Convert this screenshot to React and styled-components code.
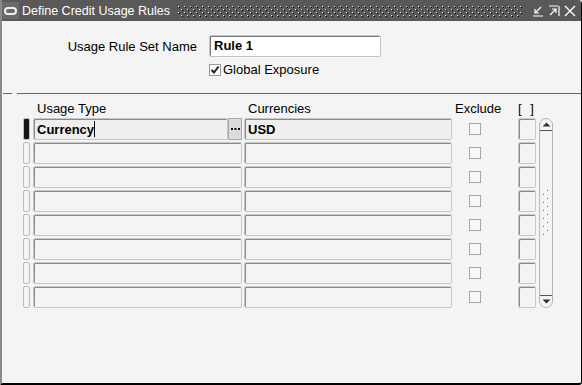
import React from 'react'
import styled, { createGlobalStyle } from 'styled-components'

const GlobalStyle = createGlobalStyle`
  html, body { margin: 0; padding: 0; background: #f4f4f4; }
  body { font-family: "Liberation Sans", Arial, sans-serif; font-size: 13px; color: #000; }
  * { box-sizing: border-box; }
`

const rows = [
  { type: 'Currency', currency: 'USD', current: true },
  {}, {}, {}, {}, {}, {}, {},
]

const App = () => {
  return (
    <Window>
      <GlobalStyle />
      <TitleBar>
        <TitleIcon><Ring /></TitleIcon>
        <TitleText>Define Credit Usage Rules</TitleText>
        <Dots>
          <svg width="100%" height="11">
            <defs>
              <pattern id="grip" width="6" height="6" patternUnits="userSpaceOnUse">
                <rect x="0" y="0" width="1" height="1" fill="#e6e6e6" />
                <rect x="1" y="1" width="1" height="1" fill="#000" />
                <rect x="3" y="3" width="1" height="1" fill="#e6e6e6" />
                <rect x="4" y="4" width="1" height="1" fill="#000" />
              </pattern>
            </defs>
            <rect width="100%" height="11" fill="url(#grip)" />
          </svg>
        </Dots>
        <TitleButtons>
          <svg width="12" height="12" viewBox="0 0 12 12">
            <path d="M9 2 L3 8 M3 4 V8 H7 M1 11 H11" stroke="#fff" strokeWidth="1.2" fill="none" />
          </svg>
          <svg width="12" height="12" viewBox="0 0 12 12">
            <path d="M1 1 H10 M11 1 V11 M2 10 L8 4 M4 4 H8 V8" stroke="#fff" strokeWidth="1.2" fill="none" />
          </svg>
          <svg width="12" height="12" viewBox="0 0 12 12">
            <path d="M1 1 L11 11 M11 1 L1 11" stroke="#fff" strokeWidth="1.4" fill="none" />
          </svg>
        </TitleButtons>
      </TitleBar>

      <Body>
        <HeaderForm>
          <Label>Usage Rule Set Name</Label>
          <NameInput>Rule 1</NameInput>
          <span />
          <CheckRow>
            <CheckBox>
              <svg width="10" height="10" viewBox="0 0 10 10">
                <path d="M1.5 5 L4 7.5 L8.5 1.5" stroke="#222" strokeWidth="2" fill="none" />
              </svg>
            </CheckBox>
            Global Exposure
          </CheckRow>
        </HeaderForm>

        <Divider>
          <Dash />
          <Rule />
        </Divider>

        <Table>
          <Columns>
            <HeadRow>
              <span />
              <Head>Usage Type</Head>
              <Head>Currencies</Head>
              <Head $pad="1px">Exclude</Head>
              <Head $pad="0" $spread>[ ]</Head>
            </HeadRow>
            {rows.map((r, i) => (
              <DataRow key={i}>
                <Indicator $current={r.current} />
                <TypeCell>
                  <Field $current={r.current}>
                    {r.type}
                    {r.current && <Caret />}
                  </Field>
                  {r.current && (
                    <LovButton>
                      <svg width="9" height="3" viewBox="0 0 9 3">
                        <rect x="0" y="0" width="2" height="2" fill="#111" />
                        <rect x="3.5" y="0" width="2" height="2" fill="#111" />
                        <rect x="7" y="0" width="2" height="2" fill="#111" />
                      </svg>
                    </LovButton>
                  )}
                </TypeCell>
                <Field $current={r.current}>{r.currency}</Field>
                <ExcludeCell><SmallBox /></ExcludeCell>
                <Field />
              </DataRow>
            ))}
          </Columns>
          <Scrollbar>
            <ScrollEnd>
              <svg width="9" height="5" viewBox="0 0 9 5"><path d="M0.5 4.5 L4.5 0.5 L8.5 4.5 Z" fill="#333" /></svg>
            </ScrollEnd>
            <Grip>
              <svg width="8" height="48" viewBox="0 0 8 48">
                {[0, 8, 16, 24, 32, 40].map(y => (
                  <g key={y}>
                    <rect x="5" y={y + 1} width="1" height="1" fill="#666" />
                    <rect x="6" y={y} width="1" height="1" fill="#fff" />
                    <rect x="1" y={y + 5} width="1" height="1" fill="#666" />
                    <rect x="2" y={y + 4} width="1" height="1" fill="#fff" />
                  </g>
                ))}
              </svg>
            </Grip>
            <ScrollEnd $bottom>
              <svg width="9" height="5" viewBox="0 0 9 5"><path d="M0.5 0.5 L4.5 4.5 L8.5 0.5 Z" fill="#333" /></svg>
            </ScrollEnd>
          </Scrollbar>
        </Table>
      </Body>
    </Window>
  )
}

const Window = styled.div`
  width: 582px;
  height: 385px;
  display: flex;
  flex-direction: column;
  border-left: 2px solid #8a8a8a;
  border-right: 1px solid #000;
  border-bottom: 2px solid #000;
  border-bottom-right-radius: 3px;
  border-top-right-radius: 4px;
  overflow: hidden;
  background: #f4f4f4;
`
const TitleBar = styled.div`
  height: 21px;
  background: #595959;
  display: flex;
  align-items: center;
  margin-left: -2px;
  padding-left: 2px;
  padding-right: 5px;
`
const TitleIcon = styled.div`
  width: 17px;
  height: 17px;
  background: #6a6a6a;
  display: flex;
  align-items: center;
  justify-content: center;
`
const Ring = styled.div`
  width: 13px;
  height: 8px;
  border: 2px solid #f0f0f0;
  border-radius: 5px;
`
const TitleText = styled.div`
  color: #fff;
  font-size: 12.5px;
  margin-left: 3px;
  white-space: nowrap;
`
const Dots = styled.div`
  flex: 1;
  height: 11px;
  margin: 0 10px 0 8px;
`
const TitleButtons = styled.div`
  display: flex;
  gap: 4px;
  align-items: center;
`
const Body = styled.div`
  flex: 1;
  display: flex;
  flex-direction: column;
  padding-top: 14px;
`
const HeaderForm = styled.div`
  display: grid;
  grid-template-columns: 195px 172px;
  column-gap: 12px;
  row-gap: 7px;
  align-items: center;
`
const Label = styled.div`
  text-align: right;
`
const NameInput = styled.div`
  height: 22px;
  background: #fff;
  border: 1px solid #c4c4c4;
  box-shadow: inset 1px 1px 0 #7a7a7a;
  border-radius: 2px;
  padding: 2px 0 0 4px;
  font-weight: bold;
`
const CheckRow = styled.div`
  display: flex;
  align-items: center;
  gap: 2px;
  height: 13px;
  margin-top: -1px;
`
const CheckBox = styled.div`
  width: 12px;
  height: 12px;
  border: 1px solid #9a9a9a;
  background: #fafafa;
  display: flex;
  align-items: center;
  justify-content: center;
`
const Divider = styled.div`
  display: flex;
  align-items: center;
  margin-top: 17px;
  margin-left: 1px;
`
const Dash = styled.div`
  width: 9px;
  height: 1px;
  background: #666;
`
const Rule = styled.div`
  flex: 1;
  height: 1px;
  background: #666;
  margin-left: 5px;
`
const Table = styled.div`
  display: flex;
  align-items: flex-end;
  margin-top: 8px;
  padding-left: 21px;
  gap: 3px;
`
const Columns = styled.div`
  display: flex;
  flex-direction: column;
  gap: 2px;
`
const rowGrid = `
  display: grid;
  grid-template-columns: 8px 209px 208px 62px 18px;
  column-gap: 2px;
`
const HeadRow = styled.div`
  ${rowGrid}
  height: 14px;
  align-items: end;
  line-height: 14px;
`
const Head = styled.div`
  padding-left: ${p => p.$pad || '4px'};
  white-space: nowrap;
  word-spacing: ${p => (p.$spread ? '5px' : 'normal')};
`
const DataRow = styled.div`
  ${rowGrid}
  height: 22px;
`
const Indicator = styled.div`
  width: 7px;
  border: 1px solid #bcbcbc;
  border-radius: 2px;
  background: ${p => (p.$current ? '#151515' : '#f4f4f4')};
`
const TypeCell = styled.div`
  display: flex;
`
const Field = styled.div`
  flex: 1;
  height: 22px;
  border: 1px solid #c6c6c6;
  box-shadow: inset 1px 1px 0 #8a8a8a;
  border-radius: 2px;
  background: ${p => (p.$current ? '#efefef' : '#f4f4f4')};
  font-weight: bold;
  padding: 3px 0 0 3px;
  display: flex;
  align-items: flex-start;
  white-space: nowrap;
`
const Caret = styled.span`
  width: 1px;
  height: 16px;
  background: #000;
  margin-top: -1px;
`
const LovButton = styled.div`
  width: 14px;
  height: 22px;
  background: #dcdcdc;
  border: 1px solid #a8a8a8;
  display: flex;
  align-items: center;
  justify-content: center;
`
const ExcludeCell = styled.div`
  display: flex;
  align-items: center;
  padding-left: 15px;
`
const SmallBox = styled.div`
  width: 12px;
  height: 12px;
  border: 1px solid #a6a6a6;
  background: #f7f7f7;
`
const Scrollbar = styled.div`
  width: 14px;
  height: 190px;
  border: 1px solid #b4b4b4;
  border-radius: 7px;
  display: flex;
  flex-direction: column;
  justify-content: space-between;
  align-items: center;
`
const ScrollEnd = styled.div`
  width: 100%;
  height: 12px;
  display: flex;
  justify-content: center;
  align-items: ${p => (p.$bottom ? 'flex-start' : 'flex-end')};
  padding: ${p => (p.$bottom ? '3px 0 0' : '0 0 3px')};
  border-${p => (p.$bottom ? 'top' : 'bottom')}: 1px solid #555;
`
const Grip = styled.div`
  height: 48px;
  display: flex;
`

export default App
